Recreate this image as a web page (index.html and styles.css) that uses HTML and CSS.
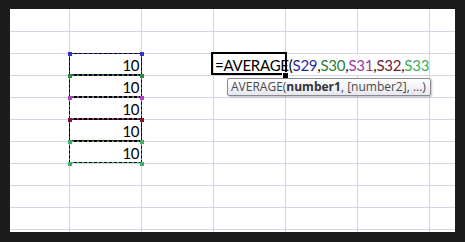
FILE: index.html
```html
<!DOCTYPE html>
<html lang="en">
<head>
	<meta charset="UTF-8">
	<title>AVERAGE</title>
<link rel="stylesheet" href="styles.css">
</head>
<body>
	<div id="sheet">
		<div id="grid">
			<div class="cell ref r29">10</div>
			<div class="cell ref r30">10</div>
			<div class="cell ref r31">10</div>
			<div class="cell ref r32">10</div>
			<div class="cell ref r33">10</div>
			<div class="cell active">
				<span class="formula">=AVERAGE(<span class="c29">S29</span>,<span class="c30">S30</span>,<span class="c31">S31</span>,<span class="c32">S32</span>,<span class="c33">S33</span></span>
				<span class="handle"></span>
			</div>
		</div>
		<div id="tip">AVERAGE(<b>number1</b>, [number2], ...)</div>
	</div>
</body>
</html>
```

FILE: styles.css
```css
*{
	margin: 0;
	padding: 0;
}
body{
	background: #1c1c1c;
	height: 242px;
	overflow: hidden;
}
#sheet{
	position: relative;
	width: 445px;
	height: 223px;
	margin: 9px 0 0 10px;
	background: #fff;
	overflow: hidden;
	font-family: Lato, sans-serif;
	font-size: 15px;
	color: #000;
}
#grid{
	position: relative;
	z-index: 0;
	display: grid;
	grid-template-columns: 60px repeat(6, 72px);
	grid-template-rows: 23px repeat(9, 22px);
	height: 100%;
	background-image:
		repeating-linear-gradient(to right, transparent 0 71px, #d0d7e5 71px 72px),
		repeating-linear-gradient(to bottom, transparent 0 21px, #d0d7e5 21px 22px);
	background-position: -12px 0, 0 1px;
}
.cell{
	position: relative;
	line-height: 22px;
	height: 21px;
	white-space: nowrap;
}
.ref{
	grid-column: 2;
	text-align: right;
	padding-right: 3px;
	letter-spacing: -0.5px;
}
.r29{grid-row: 3; --c: #3434c8;}
.r30{grid-row: 4; --c: #2f8a3a;}
.r31{grid-row: 5; --c: #b040c0;}
.r32{grid-row: 6; --c: #7a1a2a;}
.r33{grid-row: 7; --c: #3cb068;}
.ref::before{
	content: "";
	position: absolute;
	top: -1px;
	left: -1px;
	right: 0;
	bottom: 0;
	border: 1px dashed #000;
	background: linear-gradient(#fff, #fff) padding-box, var(--c) border-box;
	z-index: -1;
}
.ref::after{
	content: "";
	position: absolute;
	top: -2px;
	left: -2px;
	width: 4px;
	height: 4px;
	background: var(--c);
	box-shadow: 72px 0 var(--c), 0 22px var(--c), 72px 22px var(--c);
}
.active{
	grid-column: 4;
	grid-row: 3;
}
.formula{
	position: relative;
	z-index: 1;
	display: inline-block;
	height: 21px;
	padding-left: 1px;
	letter-spacing: -0.25px;
	background: #fff;
}
.c29{color: #2c2c9c;}
.c30{color: #2e7d3a;}
.c31{color: #9a3a9e;}
.c32{color: #6e2232;}
.c33{color: #3aae60;}
.active::after{
	content: "";
	position: absolute;
	top: -2px;
	left: -3px;
	right: -1px;
	bottom: 0;
	border: 2px solid #000;
	z-index: 2;
}
.handle{
	position: absolute;
	right: -2px;
	bottom: -3px;
	width: 5px;
	height: 5px;
	background: #000;
	box-shadow: 0 0 0 1px #fff;
	z-index: 3;
}
#tip{
	position: absolute;
	left: 217px;
	top: 69px;
	height: 16px;
	line-height: 16px;
	padding: 0 4px 0 3px;
	border: 1px solid #8a8a8a;
	border-radius: 2px;
	background: linear-gradient(#ffffff, #e6e8f0);
	box-shadow: 1px 1px 2px rgba(0,0,0,0.25);
	font-family: "Open Sans", sans-serif;
	font-size: 12px;
	color: #4a4a4a;
	white-space: nowrap;
	z-index: 4;
}
#tip b{color: #333;}
```
